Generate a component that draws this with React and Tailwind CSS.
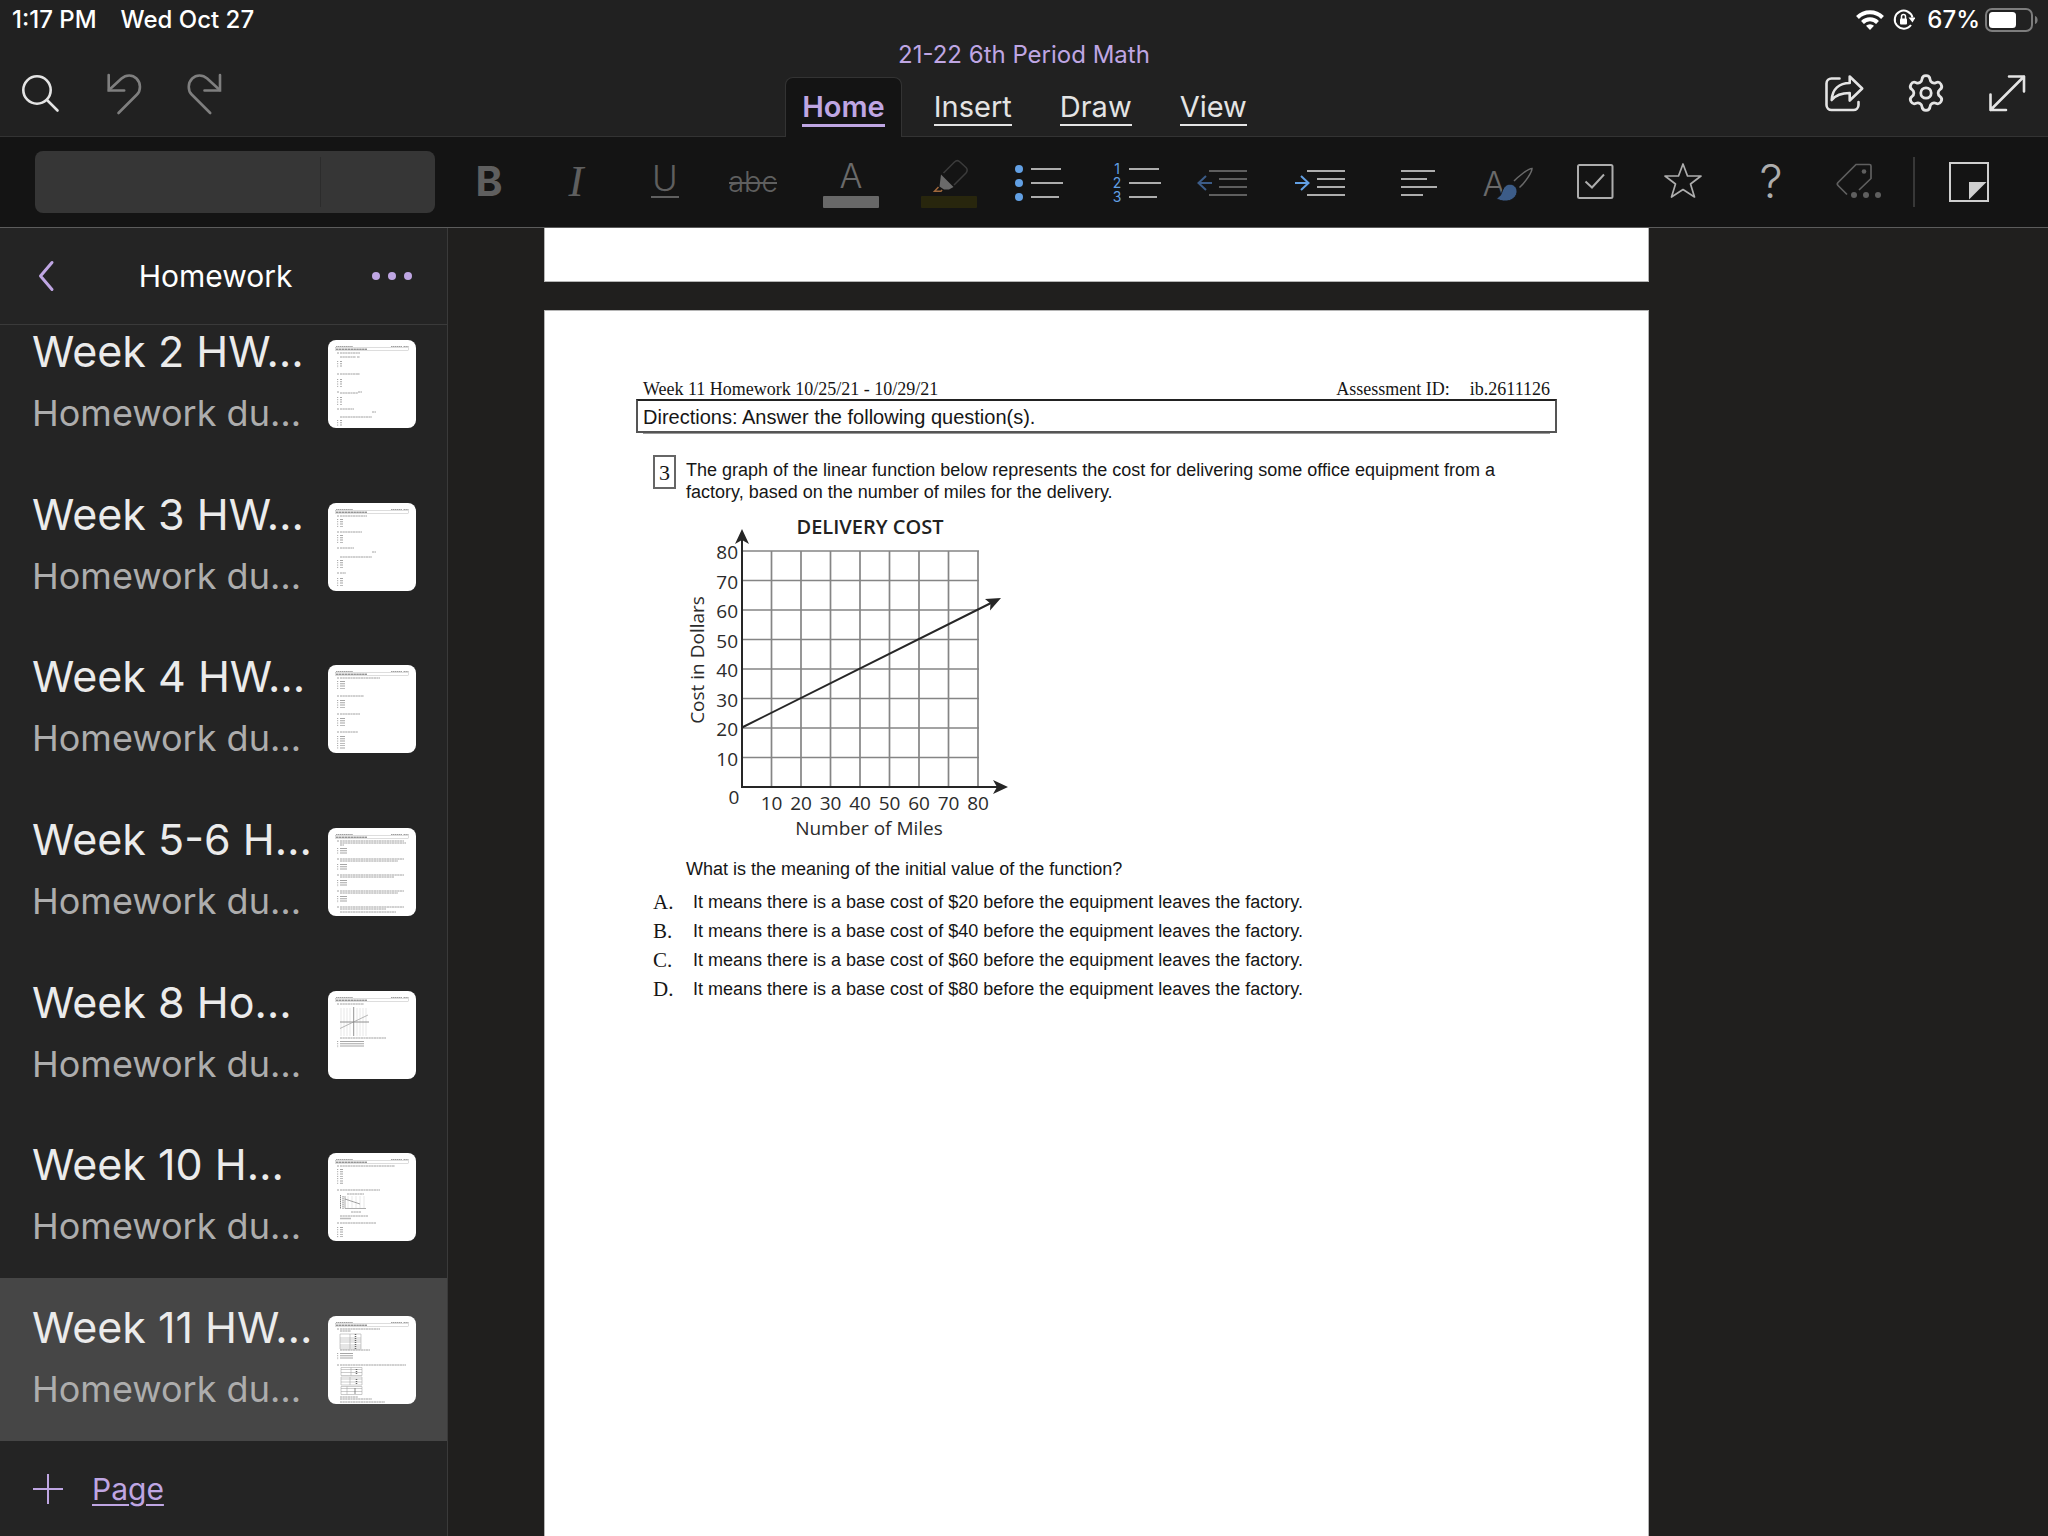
import { Settings } from 'lucide-react';

const pages = [
  {
    title: "Week 2 HW…",
    lines: [[9, 13, 2], [12, 13, 20], [12, 17, 16], [29, 17, 3], [9, 34, 2], [12, 34, 17], [29, 34, 3], [9, 52, 2], [12, 53, 18], [30, 52, 4], [9, 69, 2], [12, 69, 14], [44, 72, 4], [12, 77, 32]],
    options: [[21, 28], [39, 48], [57, 65], [80, 86]],
    optionWidth: 2,
  },
  {
    title: "Week 3 HW…",
    lines: [[9, 13, 2], [12, 13, 27], [9, 29, 2], [12, 29, 22], [9, 45, 2], [12, 45, 14], [44, 49, 4], [12, 54, 32], [9, 70, 2], [12, 70, 6]],
    options: [[16, 25], [32, 41], [57, 65], [75, 84]],
    optionWidth: 3,
  },
  {
    title: "Week 4 HW…",
    lines: [[9, 13, 2], [12, 13, 40], [9, 31, 2], [12, 31, 24], [9, 49, 2], [12, 49, 20], [9, 67, 2], [12, 67, 18]],
    options: [[16, 25], [35, 44], [53, 62], [71, 84]],
    optionWidth: 5,
  },
  {
    title: "Week 5-6 H…",
    lines: [[9, 13, 2], [12, 13, 64], [12, 15, 66], [12, 17, 4], [9, 31, 2], [12, 31, 64], [12, 33, 58], [9, 47, 2], [12, 47, 64], [12, 49, 54], [9, 63, 2], [12, 63, 64], [12, 65, 58], [9, 79, 2], [12, 79, 64], [12, 81, 46], [12, 84, 56]],
    options: [[20, 26], [36, 42], [52, 59], [68, 75]],
    optionWidth: 7,
  },
  {
    title: "Week 8 Ho…",
    lines: [[9, 13, 2], [12, 13, 24], [12, 47, 46]],
    options: [[50, 57]],
    optionWidth: 24,
    drawing: "plane",
  },
  {
    title: "Week 10 H…",
    lines: [[9, 13, 2], [12, 13, 55], [9, 37, 2], [12, 37, 40], [19, 41, 17], [23, 59, 10], [12, 63, 28], [9, 70, 2], [12, 70, 36]],
    options: [[16, 31], [74, 85]],
    optionWidth: 3,
    drawing: "graph",
  },
  {
    title: "Week 11 HW…",
    selected: true,
    lines: [[9, 13, 2], [12, 13, 40], [12, 15, 11], [12, 34, 30], [9, 49, 2], [12, 49, 66], [12, 81, 18], [12, 83, 32], [12, 86, 45]],
    options: [[37, 44]],
    optionWidth: 13,
    drawing: "tables",
  },
];

const answers = [
  { letter: "A.", text: "It means there is a base cost of $20 before the equipment leaves the factory." },
  { letter: "B.", text: "It means there is a base cost of $40 before the equipment leaves the factory." },
  { letter: "C.", text: "It means there is a base cost of $60 before the equipment leaves the factory." },
  { letter: "D.", text: "It means there is a base cost of $80 before the equipment leaves the factory." },
];

const tens = [10, 20, 30, 40, 50, 60, 70, 80];

const StatusBar = () => (
  <div className="flex h-10 items-center justify-between pr-[10px] pl-3 text-2xl leading-10 font-medium text-white">
    <div className="flex gap-6">
      <span>1:17 PM</span>
      <span>Wed Oct 27</span>
    </div>
    <div className="flex items-center">
      <svg className="mr-2 h-8 w-[30px]" viewBox="1857 4 30 32" fill="none" stroke="#fff" strokeWidth="4">
        <path d="M1859.5 17.5a17.5 17.5 0 0 1 25 0" />
        <path d="M1864.5 22.5a10.5 10.5 0 0 1 15 0" />
        <path d="M1872 30l-4-4.2a5.8 5.8 0 0 1 8 0z" fill="#fff" stroke="none" />
      </svg>
      <svg className="mr-3 h-8 w-[22px]" viewBox="1896 4 22 32" fill="none" stroke="#fff" strokeWidth="2">
        <path d="M1914 25a9 9 0 1 1 1.500-7.500" />
        <path d="M1911.5 17.500h7l-3 5z" fill="#fff" stroke="none" />
        <rect x="1903" y="18.500" width="7" height="6" rx="1" fill="#fff" stroke="none" />
        <path d="M1904.500 19v-2.500a2 2 0 0 1 4 0v2.500" strokeWidth="1.500" />
      </svg>
      <span className="mr-1">67%</span>
      <svg className="h-8 w-[54px]" viewBox="1984 4 54 32" fill="none">
        <rect x="1986" y="9" width="46" height="22" rx="6" stroke="#7d7d7d" strokeWidth="2" />
        <rect x="1989" y="12" width="27" height="16" rx="3.500" fill="#fff" />
        <path d="M2035 16c3.500 1 3.500 7 0 8z" fill="#7d7d7d" />
      </svg>
    </div>
  </div>
);

const Header = () => (
  <header className="bg-[#212121]">
    <StatusBar />
    <div className="grid grid-cols-[1fr_auto_1fr] border-b border-[#333333]">
      <div className="flex items-center gap-[42px] pt-[10px] pl-5">
        <button aria-label="Search" className="size-10">
          <svg className="size-10" viewBox="20 73 40 40" fill="none" stroke="#e4e4e4" strokeWidth="2.600" strokeLinecap="round">
            <circle cx="37" cy="90" r="13.700" />
            <path d="M47 100l10.500 10.500" />
          </svg>
        </button>
        <button aria-label="Undo" className="size-10">
          <svg className="size-10 overflow-visible" viewBox="102 73 40 40" fill="none" stroke="#7f7f7f" strokeWidth="2.600" strokeLinecap="round">
            <path d="M108.700 75v15.500h15.500" />
            <path d="M109 90l12.500-11.500C126 74.500 132.500 74.500 136.500 78.500c4.500 4.500 4.500 12 .5 16L118.500 113" />
          </svg>
        </button>
        <button aria-label="Redo" className="size-10">
          <svg className="size-10 overflow-visible" viewBox="184 73 40 40" fill="none" stroke="#7f7f7f" strokeWidth="2.600" strokeLinecap="round">
            <path d="M220 75v15.500h-15.500" />
            <path d="M219.700 90l-12.500-11.500C202.700 74.500 196.200 74.500 192.200 78.500c-4.500 4.500-4.500 12-.5 16L210.200 113" />
          </svg>
        </button>
      </div>

      <div className="flex flex-col items-center">
        <h1 className="mb-[7px] text-2xl leading-[30px] text-[#bfa6e3]">21-22 6th Period Math</h1>
        <nav className="-mb-px flex gap-4 text-[29px] text-[#e4e4e4]">
          <a href="#home" className="rounded-t-lg border border-b-0 border-[#333333] bg-[#141414] px-4 pt-3 pb-[10px] font-semibold text-[#bfa6e3]">
            <span className="block border-b-3 border-[#bfa6e3] leading-[34px]">Home</span>
          </a>
          <a href="#insert" className="px-4 pt-[13px] pb-[11px]">
            <span className="block border-b-2 border-[#e4e4e4] leading-[34px]">Insert</span>
          </a>
          <a href="#draw" className="px-4 pt-[13px] pb-[11px]">
            <span className="block border-b-2 border-[#e4e4e4] leading-[34px]">Draw</span>
          </a>
          <a href="#view" className="px-4 pt-[13px] pb-[11px]">
            <span className="block border-b-2 border-[#e4e4e4] leading-[34px]">View</span>
          </a>
        </nav>
      </div>

      <div className="flex items-center justify-end gap-[41px] pt-[10px] pr-[21px]">
        <button aria-label="Share" className="size-10">
          <svg className="size-10" viewBox="1825 74 40 40" fill="none" stroke="#e4e4e4" strokeWidth="2.600" strokeLinecap="round" strokeLinejoin="round">
            <path d="M1839.500 79.500h-8a5 5 0 0 0-5 5v21.500a5 5 0 0 0 5 5h22a5 5 0 0 0 5-5v-3" />
            <path d="M1849.700 77.500l12.500 12-12.500 12v-7.500c-8 0-13.500 1.500-18 7 .5-11 7.500-17 18-17z" />
          </svg>
        </button>
        <button aria-label="Settings" className="size-10">
          <Settings className="size-10 text-[#e4e4e4]" size={40} strokeWidth={1.6} viewBox="1 0.500 22 23" />
        </button>
        <button aria-label="Full screen" className="size-10">
          <svg className="size-10" viewBox="1987 74 40 40" fill="none" stroke="#e4e4e4" strokeWidth="2.600" strokeLinecap="round" strokeLinejoin="round">
            <path d="M1990.500 111l33.500-33.500M2009 77.500h15v15M1990.500 95.500v15.500h15.500" />
          </svg>
        </button>
      </div>
    </div>
  </header>
);

// Each tool is drawn in the coordinates of the whole bar, x is its left edge
const Tool = ({ label, x, wide, children }) => (
  <button aria-label={label} className={wide ? "h-16 w-[98px] shrink-0" : "h-16 w-[88px] shrink-0"}>
    <svg className="size-full" viewBox={`${x} 150 ${wide ? 98 : 88} 64`} fill="none">
      {children}
    </svg>
  </button>
);

const Toolbar = () => (
  <div className="flex items-center border-b border-[#5c5c5c] bg-[#141414] py-[13px] pl-[35px]">
    <div className="mr-[10px] flex h-[62px] w-[400px] items-center rounded-lg bg-[#363636]">
      <select aria-label="Font" className="h-[50px] flex-1 appearance-none border-r border-[#2c2c2c]"></select>
      <select aria-label="Font size" className="h-[50px] w-[114px] appearance-none"></select>
    </div>

    <Tool label="Bold" x={445}>
      <text x="489" y="196" textAnchor="middle" fontSize="41" fontWeight="700" fill="#5f5f5f">B</text>
    </Tool>
    <Tool label="Italic" x={533}>
      <text x="576" y="196" textAnchor="middle" fontSize="45" fontStyle="italic" fontFamily="Liberation Serif" fill="#5f5f5f">I</text>
    </Tool>
    <Tool label="Underline" x={621}>
      <text x="665" y="191" textAnchor="middle" fontSize="35" fontWeight="300" fill="#5f5f5f">U</text>
      <path d="M651 197h28" stroke="#5f5f5f" strokeWidth="2" />
    </Tool>
    <Tool label="Strikethrough" x={709}>
      <text x="753" y="192" textAnchor="middle" fontSize="29" fontWeight="300" fill="#5f5f5f">abc</text>
      <path d="M729 183h48" stroke="#5f5f5f" strokeWidth="2" />
    </Tool>
    <Tool label="Font color" x={797} wide>
      <text x="851" y="188" textAnchor="middle" fontSize="34" fontWeight="300" fill="#6a6a6a">A</text>
      <rect x="823" y="196" width="56" height="12" rx="1" fill="#686868" />
    </Tool>
    <Tool label="Highlight" x={895} wide>
      <path d="M943.500 173l11-11c2-2 4-1.500 5.500 0l6 5.500c1.500 1.500 1.500 3.500 0 5.500L954 185" stroke="#3b3b3b" strokeWidth="1.500" />
      <path d="M941 174.500l12.500 12.500-4.500 2.500h-5l-4.500-3z" fill="#6a6a6a" />
      <path d="M938.500 187l-4 4.300h6.500l1-1.500" stroke="#a0683c" strokeWidth="1.500" />
      <rect x="921" y="196" width="56" height="12" rx="1" fill="#28260d" />
    </Tool>
    <Tool label="Bulleted list" x={993} wide>
      <g fill="#62a0e4">
        <circle cx="1019" cy="169" r="4" />
        <circle cx="1019" cy="183" r="4" />
        <circle cx="1019" cy="197" r="4" />
      </g>
      <path d="M1031 169h30M1031 183h32M1031 197h28" stroke="#adadad" strokeWidth="2" />
    </Tool>
    <Tool label="Numbered list" x={1091} wide>
      <g fill="#62a0e4" fontSize="14" textAnchor="middle">
        <text x="1117" y="174">1</text>
        <text x="1117" y="188">2</text>
        <text x="1117" y="202">3</text>
      </g>
      <path d="M1129 169h30M1129 183h32M1129 197h28" stroke="#adadad" strokeWidth="2" />
    </Tool>
    <Tool label="Decrease indent" x={1189}>
      <path d="M1212 183h-13M1206 176l-7.500 7 7.500 7" stroke="#3c5c88" strokeWidth="2" />
      <path d="M1209 171h38M1219 179h28M1219 187h28M1209 195h38" stroke="#5f5f5f" strokeWidth="2" />
    </Tool>
    <Tool label="Increase indent" x={1277} wide>
      <path d="M1295 183h13M1301 176l7.500 7-7.500 7" stroke="#62a0e4" strokeWidth="2" />
      <path d="M1307 171h38M1317 179h28M1317 187h28M1307 195h38" stroke="#adadad" strokeWidth="2" />
    </Tool>
    <Tool label="Alignment" x={1375}>
      <path d="M1401 171h34M1401 179h26M1401 187h36M1401 195h22" stroke="#adadad" strokeWidth="2" />
    </Tool>
    <Tool label="Styles" x={1463}>
      <text x="1494" y="196" textAnchor="middle" fontSize="34" fontWeight="300" fill="#6a6a6a">A</text>
      <path d="M1514 181c4-4 14-12.500 18-12.500 0 4-7 14-12.500 19" stroke="#6a6a6a" strokeWidth="1.500" />
      <path d="M1496 198c6-1.500 5-6 8-10.500 3-4.500 9-4.500 12 0 3.500 6-2 13-9 13.500-5 .3-8-.5-11-3z" fill="#3c5c88" stroke="#141414" />
    </Tool>
    <Tool label="To do" x={1551}>
      <rect x="1578" y="165" width="34.500" height="33" rx="1.500" stroke="#adadad" strokeWidth="2" />
      <path d="M1585.500 181.500l6.500 6 12-13" stroke="#adadad" strokeWidth="2" />
    </Tool>
    <Tool label="Important" x={1639}>
      <path d="M1683 164l4.500 12h13.500l-10.500 8 4 13-11.500-7.500-11.500 7.500 4-13-10.500-8h13.500z" stroke="#adadad" strokeWidth="1.700" strokeLinejoin="round" />
    </Tool>
    <Tool label="Question" x={1727}>
      <text x="1771" y="198" textAnchor="middle" fontSize="46" fontWeight="300" fill="#adadad">?</text>
    </Tool>
    <Tool label="More tags" x={1815}>
      <path d="M1847 194.500l-9-9c-1-1-1-2 0-3l18-18h13.500c1 0 1.500.5 1.500 1.500v12.500l-12 11.500" stroke="#5f5f5f" strokeWidth="1.700" />
      <g fill="#5f5f5f">
        <circle cx="1864" cy="171.500" r="2.300" />
        <circle cx="1854" cy="195" r="3" />
        <circle cx="1866" cy="195" r="3" />
        <circle cx="1878" cy="195" r="3" />
      </g>
    </Tool>
    <div className="mr-[10px] ml-[10px] h-[50px] w-[2px] bg-[#383838]"></div>
    <Tool label="Page settings" x={1925}>
      <rect x="1950" y="163" width="38" height="38" stroke="#cfcfcf" strokeWidth="2" />
      <path d="M1969 182h17.500l-17.500 17.500z" fill="#cfcfcf" />
    </Tool>
  </div>
);

const ThumbDrawing = ({ kind }) => {
  if (kind === "plane") {
    return (
      <g fill="none">
        {[13, 16, 19, 22, 29, 32, 35, 38].map((x) => (
          <path key={x} d={`M${x} 17v28`} stroke="#dddddd" strokeWidth="0.7" />
        ))}
        <path d="M25.700 16v29M12 31h29" stroke="#777" strokeWidth="0.8" />
        <path d="M12 37.500L40 24" stroke="#999" strokeWidth="0.7" />
      </g>
    );
  }
  if (kind === "graph") {
    return (
      <g fill="none">
        {[20, 24, 28, 32, 36].map((x) => (
          <path key={x} d={`M${x} 43v12`} stroke="#dddddd" strokeWidth="0.7" />
        ))}
        <path d="M12.500 42v14M15 43v13" stroke="#888" strokeDasharray="1.500 0.5" />
        <path d="M17 43v12.500h21" stroke="#888" strokeWidth="0.7" />
        <path d="M17 46l15 5" stroke="#666" strokeWidth="0.6" />
        <path d="M12 65.500h11" stroke="#bbb" strokeWidth="1.500" />
      </g>
    );
  }
  return (
    <g fill="none" stroke="#999" strokeWidth="0.5">
      <path d="M12 18h21v15h-21zM22 18v15M12 22h21M12 24h21M12 26h21M12 29h21M12 31h21" />
      <path d="M13 51.500h21v8h-21zM23 51.500v8M13 53.500h21M13 56.500h21" />
      <path d="M13 61h21v8h-21zM22 61v8M13 63h21M13 66h21" />
      <path d="M13 70.500h21v8h-21zM19 70.500v8M13 72.500h21M13 75.500h21" />
      <path d="M27.500 18v15M28.500 53v6M28.500 63v6M27 72.500v6" stroke="#666" strokeWidth="1.500" strokeDasharray="1 1" />
    </g>
  );
};

const Thumbnail = ({ page }) => (
  <svg className="size-[88px] shrink-0 rounded-lg bg-white" viewBox="0 0 88 88">
    <path d="M8 6.500h17M63 6.500h11M75.500 6.500h5" stroke="#888" strokeWidth="0.8" strokeDasharray="1.500 0.400" />
    <rect x="7.500" y="7.700" width="73" height="2.800" fill="none" stroke="#aaa" strokeWidth="0.4" />
    <path d="M8 9.200h31" stroke="#666" strokeDasharray="2.500 0.400" />
    {page.lines.map(([x, y, w], i) => (
      <path key={i} d={`M${x} ${y}h${w}`} stroke="#8a8a8a" strokeWidth="0.8" strokeDasharray="2.200 0.400" />
    ))}
    {page.options.map(([top, bottom]) => (
      <g key={top} strokeDasharray="0.900 1.400">
        <path d={`M9.700 ${top}V${bottom}`} stroke="#8a8a8a" />
        <path d={`M${12 + page.optionWidth / 2} ${top}V${bottom}`} stroke="#a6a6a6" strokeWidth={page.optionWidth} />
      </g>
    ))}
    {page.drawing && <ThumbDrawing kind={page.drawing} />}
  </svg>
);

const Sidebar = () => (
  <aside className="flex w-[448px] shrink-0 flex-col border-r border-[#3a3a3a] bg-[#242424]">
    <div className="flex items-center justify-between border-b border-[#3a3a3a] px-8 py-6">
      <button aria-label="Back">
        <svg className="h-12 w-8" viewBox="32 253 32 48" fill="none" stroke="#bfa6e3" strokeWidth="3" strokeLinecap="round" strokeLinejoin="round">
          <path d="M52 263.500L40.500 277l11.500 13.500" />
        </svg>
      </button>
      <h2 className="text-[30px] leading-10 text-white">Homework</h2>
      <button aria-label="More options">
        <svg className="h-12 w-12" viewBox="367 253 48 48" fill="#bfa6e3">
          <circle cx="376" cy="277" r="4" />
          <circle cx="392" cy="277" r="4" />
          <circle cx="408" cy="277" r="4" />
        </svg>
      </button>
    </div>

    {/* The list is scrolled a little, so the first row starts above the edge */}
    <div className="flex min-h-0 flex-1 flex-col overflow-hidden">
      <ul className="-mt-[22px] flex flex-1 flex-col">
        {pages.map((page) => (
          <li key={page.title} className={page.selected ? "flex-1 bg-[#464646]" : "flex-1"}>
            <a href="#page" className="flex h-full items-center justify-between pr-[31px] pl-8">
              <div className="pb-1 whitespace-nowrap">
                <p className="text-[43px] leading-[62px] text-[#ebebeb]">{page.title}</p>
                <p className="text-4xl leading-[62px] text-[#adadad]">Homework du…</p>
              </div>
              <Thumbnail page={page} />
            </a>
          </li>
        ))}
      </ul>
    </div>

    <button className="flex h-[95px] items-center gap-7 pl-8 text-[#bfa6e3]">
      <svg className="size-8" viewBox="0 0 32 32" fill="none" stroke="currentColor" strokeWidth="2">
        <path d="M16 1v30M1 16h30" />
      </svg>
      <span className="text-[30px] leading-10 underline decoration-2 underline-offset-4">Page</span>
    </button>
  </aside>
);

const CostChart = () => (
  <svg className="h-[336px] w-[380px]" viewBox="660 508 380 336" fontFamily="Open Sans" fontSize="19" fill="#2b2b2b" role="img" aria-label="Delivery cost">
    <text x="870" y="534" textAnchor="middle" fontSize="20" fontWeight="600" fill="#222">DELIVERY COST</text>
    {tens.map((n) => (
      <g key={n}>
        <path d={`M${742 + n * 2.95} 551V787M742 ${787 - n * 2.95}H979`} stroke="#858585" strokeWidth="1.700" />
        <text x="738" y={795 - n * 2.95} textAnchor="end">{n}</text>
        <text x={742 + n * 2.95} y="810" textAnchor="middle">{n}</text>
      </g>
    ))}
    <text x="734" y="804" textAnchor="middle">0</text>
    <text x="869" y="835" textAnchor="middle" fontWeight="500">Number of Miles</text>
    <text transform="translate(704 660) rotate(-90)" textAnchor="middle" fontWeight="500">Cost in Dollars</text>
    <g stroke="#262626" strokeWidth="2" fill="none">
      <path d="M742 536V787H1002M742 727.500L994 601.500" />
    </g>
    <g fill="#262626">
      <path d="M742 529l7 15-7-4-7 4z" />
      <path d="M1008 787l-15 7 4-7-4-7z" />
      <path d="M1001 598l-11 12.500.5-7-5.500-4.500z" />
    </g>
  </svg>
);

const Document = () => (
  <main className="flex flex-1 flex-col overflow-hidden bg-[#201f1e] pl-24">
    <div className="h-[54px] w-[1105px] shrink-0 border-x border-b border-[#b5b5b5] bg-white"></div>
    <article className="mt-7 w-[1105px] flex-1 border border-b-0 border-[#b5b5b5] bg-white px-[91px] pt-[68px] text-[#161616]">
      <div className="flex justify-between px-[7px] font-['Liberation_Serif',serif] text-[18px] leading-[20px]">
        <span>Week 11 Homework 10/25/21 - 10/29/21</span>
        <span className="flex gap-5">
          <span>Assessment ID:</span>
          <span>ib.2611126</span>
        </span>
      </div>
      <p className="border-2 border-[#555555] border-t-[#222222] px-[5px] pt-[2px] font-['Liberation_Sans',sans-serif] text-[20px] leading-[28px]">
        Directions: Answer the following question(s).
      </p>
      <div className="mx-[7px] h-px bg-[#999999]"></div>

      <section className="mt-[21px] pl-[17px] font-['Liberation_Sans',sans-serif] text-[18px] leading-[22px]">
        <div className="flex gap-[10px]">
          <span className="h-[34px] w-[23px] border-2 border-[#666666] text-center font-['Liberation_Serif',serif] text-[22px] leading-[32px]">3</span>
          <p className="w-[840px] pt-1">
            The graph of the linear function below represents the cost for delivering some office equipment from a factory, based on the number of miles for the delivery.
          </p>
        </div>
        <div className="pt-[5px] pl-[7px]">
          <CostChart />
        </div>
        <p className="mt-[14px] pl-[33px]">What is the meaning of the initial value of the function?</p>
        <ol className="mt-2">
          {answers.map((answer) => (
            <li key={answer.letter} className="flex leading-[29px]">
              <span className="w-10 font-['Liberation_Serif',serif] text-[21px]">{answer.letter}</span>
              <span>{answer.text}</span>
            </li>
          ))}
        </ol>
      </section>
    </article>
  </main>
);

const App = () => {
  return (
    <div className="flex h-screen flex-col overflow-hidden bg-[#201f1e] font-['Inter',sans-serif]">
      <Header />
      <Toolbar />
      <div className="flex min-h-0 flex-1">
        <Sidebar />
        <Document />
      </div>
    </div>
  );
};

export default App;
